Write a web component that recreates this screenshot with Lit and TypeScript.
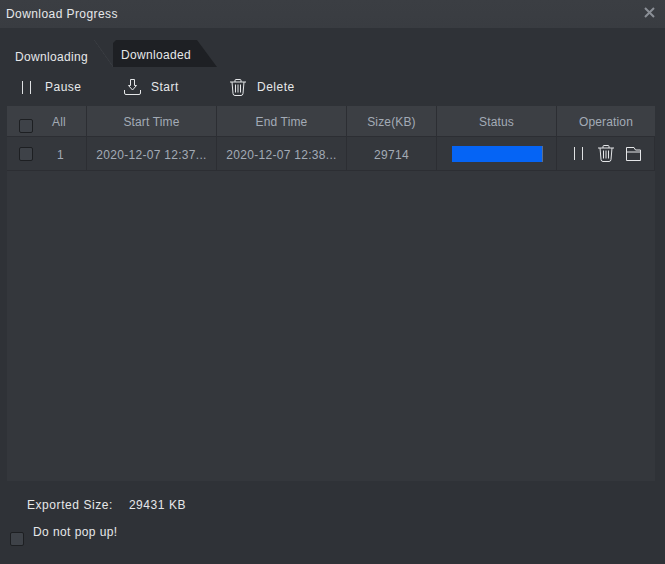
import { LitElement, html, css, svg } from "lit";
import { customElement } from "lit/decorators.js";

const pause = html`<svg class="ic" width="12" height="13" viewBox="0 0 12 13" fill="none" stroke="#dfe1e3" stroke-width="1"><path d="M.5 0V13M8.5 0V13"/></svg>`;
const trash = html`<svg class="ic" width="16" height="17" viewBox="0 0 16 17" fill="none" stroke="#e4e6e8" stroke-width="1"><path d="M0 3H16M5 3V1.5Q5 .5 6 .5H10Q11 .5 11 1.5V3M2 3L3 14.5Q3.2 16.5 5 16.5H11Q12.8 16.5 13 14.5L14 3M5.5 5.5V13.5M8 5.5V13.5M10.5 5.5V13.5"/></svg>`;
const start = html`<svg class="ic" width="17" height="16" viewBox="0 0 17 16" fill="none" stroke="#e4e6e8" stroke-width="1"><path d="M6.5.5H10.5V6.5H12.5L8.5 11L4.5 6.5H6.5ZM.5 11V14Q.5 15.5 2 15.5H15Q16.5 15.5 16.5 14V11"/></svg>`;
const folder = html`<svg class="ic" width="15" height="14" viewBox="0 0 15 14" fill="none" stroke="#e4e6e8" stroke-width="1"><path d="M.5 13.5V.5H8L9.5 3H14.5V13.5ZM.5 5H14.5"/></svg>`;
const close = svg`<path d="M1 1L10 10M10 1L1 10" stroke="#8b8f96" stroke-width="2" fill="none"/>`;

@customElement("app-root")
export class AppRoot extends LitElement {
  static styles = css`
    :host { display: block; width: 665px; height: 564px; background: #2f3237; color: #e6e8ea; font: 12px "Liberation Sans", Arial, sans-serif; overflow: hidden; letter-spacing: .3px; }
    .root { display: flex; flex-direction: column; height: 564px; }
    .title { height: 28px; flex: none; box-sizing: border-box; padding: 0 10px 0 6px; display: flex; align-items: center; justify-content: space-between; background: linear-gradient(#3b3e43, #393c41); letter-spacing: .42px; }
    .title svg { display: block; margin-top: -4px; }
    .tabs { height: 39px; flex: none; display: flex; align-items: flex-end; padding-left: 15px; box-sizing: border-box; }
    .tab1 { width: 98px; height: 27px; line-height: 34px; position: relative; letter-spacing: .33px; }
    .tab1::after { content: ""; position: absolute; right: 0; top: 0; width: 19px; height: 27px; background: linear-gradient(to top right, transparent 49%, #3a3d42 50%, transparent 53%); }
    .tab2 { width: 104px; height: 27px; box-sizing: border-box; padding-left: 8px; line-height: 30px; background: #1e2024; clip-path: polygon(3px 0, 84px 0, 104px 27px, 0 27px, 0 3px); letter-spacing: .33px; }
    .bar { height: 39px; flex: none; display: flex; align-items: center; box-sizing: border-box; padding-top: 1px; letter-spacing: .5px; }
    .act { display: flex; align-items: center; }
    .a1 { width: 124px; padding-left: 22px; box-sizing: border-box; gap: 11px; }
    .a2 { width: 106px; gap: 10px; }
    .a3 { gap: 11px; }
    .ic { display: block; }
    .panel { flex: none; height: 375px; margin: 0 10px 0 7px; background: #34373c; }
    .grid { display: grid; grid-template-columns: 80px 130px 130px 90px 120px 98px; }
    .cell { display: flex; align-items: center; justify-content: center; color: #a3abb6; border-right: 1px solid #2c2e33; box-sizing: border-box; }
    .head { background: #3c3f44; height: 30px; padding-top: 2px; letter-spacing: .15px; }
    .row { height: 35px; border-top: 1px solid #2c2e33; border-bottom: 1px solid #2c2e33; padding-top: 2px; }
    .head.last { border-right: none; }
    .ops { justify-content: flex-start; padding: 0 0 0 17px; gap: 12px; }
    .sel { justify-content: flex-start; padding-left: 12px; gap: 24px; }
    .head.sel { gap: 19px; }
    .cb { width: 12px; height: 12px; flex: none; border: 1px solid #1d1f22; border-radius: 2px; background: #3e4248; display: block; }
    .head .cb { margin-top: 7px; }
    .row.sel .cb { margin-top: -2px; }
    .prog { width: 91px; height: 16px; background: #0564f5; border-right: 1px solid #5c6f8f; box-sizing: border-box; }
    .pc { padding: 1px 0 0 1px; }
    .foot { display: flex; gap: 16px; padding: 17px 0 0 27px; line-height: 14px; letter-spacing: .56px; }
    .pop { display: flex; align-items: flex-start; padding: 13px 0 0 10px; gap: 9px; letter-spacing: .42px; }
    .pop .cb { margin-top: 7px; }
  `;

  render() {
    const heads = ["Start Time", "End Time", "Size(KB)", "Status"];
    return html`<div class="root">
      <div class="title"><span>Download Progress</span><svg width="11" height="11" viewBox="0 0 11 11">${close}</svg></div>
      <div class="tabs"><div class="tab1">Downloading</div><div class="tab2">Downloaded</div></div>
      <div class="bar">
        <div class="act a1">${pause}<span>Pause</span></div>
        <div class="act a2">${start}<span>Start</span></div>
        <div class="act a3">${trash}<span>Delete</span></div>
      </div>
      <div class="panel">
        <div class="grid">
          <div class="cell head sel"><i class="cb"></i><span>All</span></div>
          ${heads.map((h) => html`<div class="cell head">${h}</div>`)}
          <div class="cell head last">Operation</div>
          <div class="cell row sel"><i class="cb"></i><span>1</span></div>
          <div class="cell row">2020-12-07 12:37...</div>
          <div class="cell row">2020-12-07 12:38...</div>
          <div class="cell row">29714</div>
          <div class="cell row pc"><div class="prog"></div></div>
          <div class="cell row ops">${pause}${trash}${folder}</div>
        </div>
      </div>
      <div class="foot"><span>Exported Size:</span><span>29431 KB</span></div>
      <div class="pop"><i class="cb"></i><span>Do not pop up!</span></div>
    </div>`;
  }
}
